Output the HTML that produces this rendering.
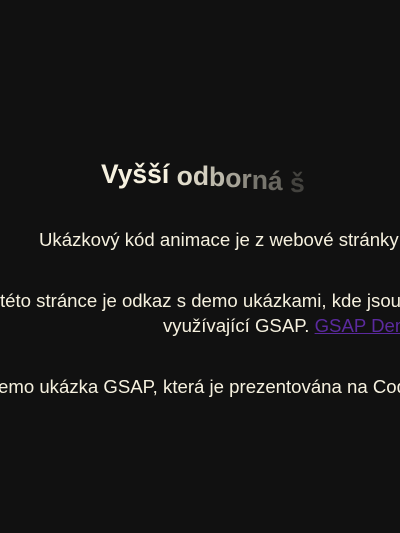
<!DOCTYPE html>
<html><head><meta charset="utf-8"><style>
html,body{margin:0;padding:0;width:400px;height:533px;overflow:hidden;background:#111;}
body{font-family:"Liberation Sans",Arial,sans-serif;color:#f6f1df;position:relative;}
.l{position:absolute;white-space:nowrap;font-size:18.6px;line-height:20px;}
h1{position:absolute;left:101px;top:159px;margin:0;font-size:26.5px;font-weight:bold;white-space:nowrap;line-height:30px;}
h1 span{display:inline-block;}
a{color:#5b2a9e;}
</style></head><body>
<h1>Vyšší <span style="transform:translateY(2px);opacity:.9">o</span><span style="transform:translateY(2px);opacity:.85">d</span><span style="transform:translateY(3px);opacity:.75">b</span><span style="transform:translateY(4px);opacity:.65">o</span><span style="transform:translateY(5px);opacity:.55">r</span><span style="transform:translateY(6px);opacity:.45">n</span><span style="transform:translateY(7px);opacity:.38">á</span> <span style="transform:translateY(9px);opacity:.22">š</span></h1>
<div class="l" style="left:39px;top:230px">Ukázkový kód animace je z webové stránky</div>
<div class="l" style="left:0;top:291px">této stránce je odkaz s demo ukázkami, kde jsou</div>
<div class="l" style="left:163px;top:316px">využívající GSAP. <a href="#">GSAP Dem</a></div>
<div class="l" style="left:-2px;top:377px">emo ukázka GSAP, která je prezentována na Cod</div>
</body></html>
